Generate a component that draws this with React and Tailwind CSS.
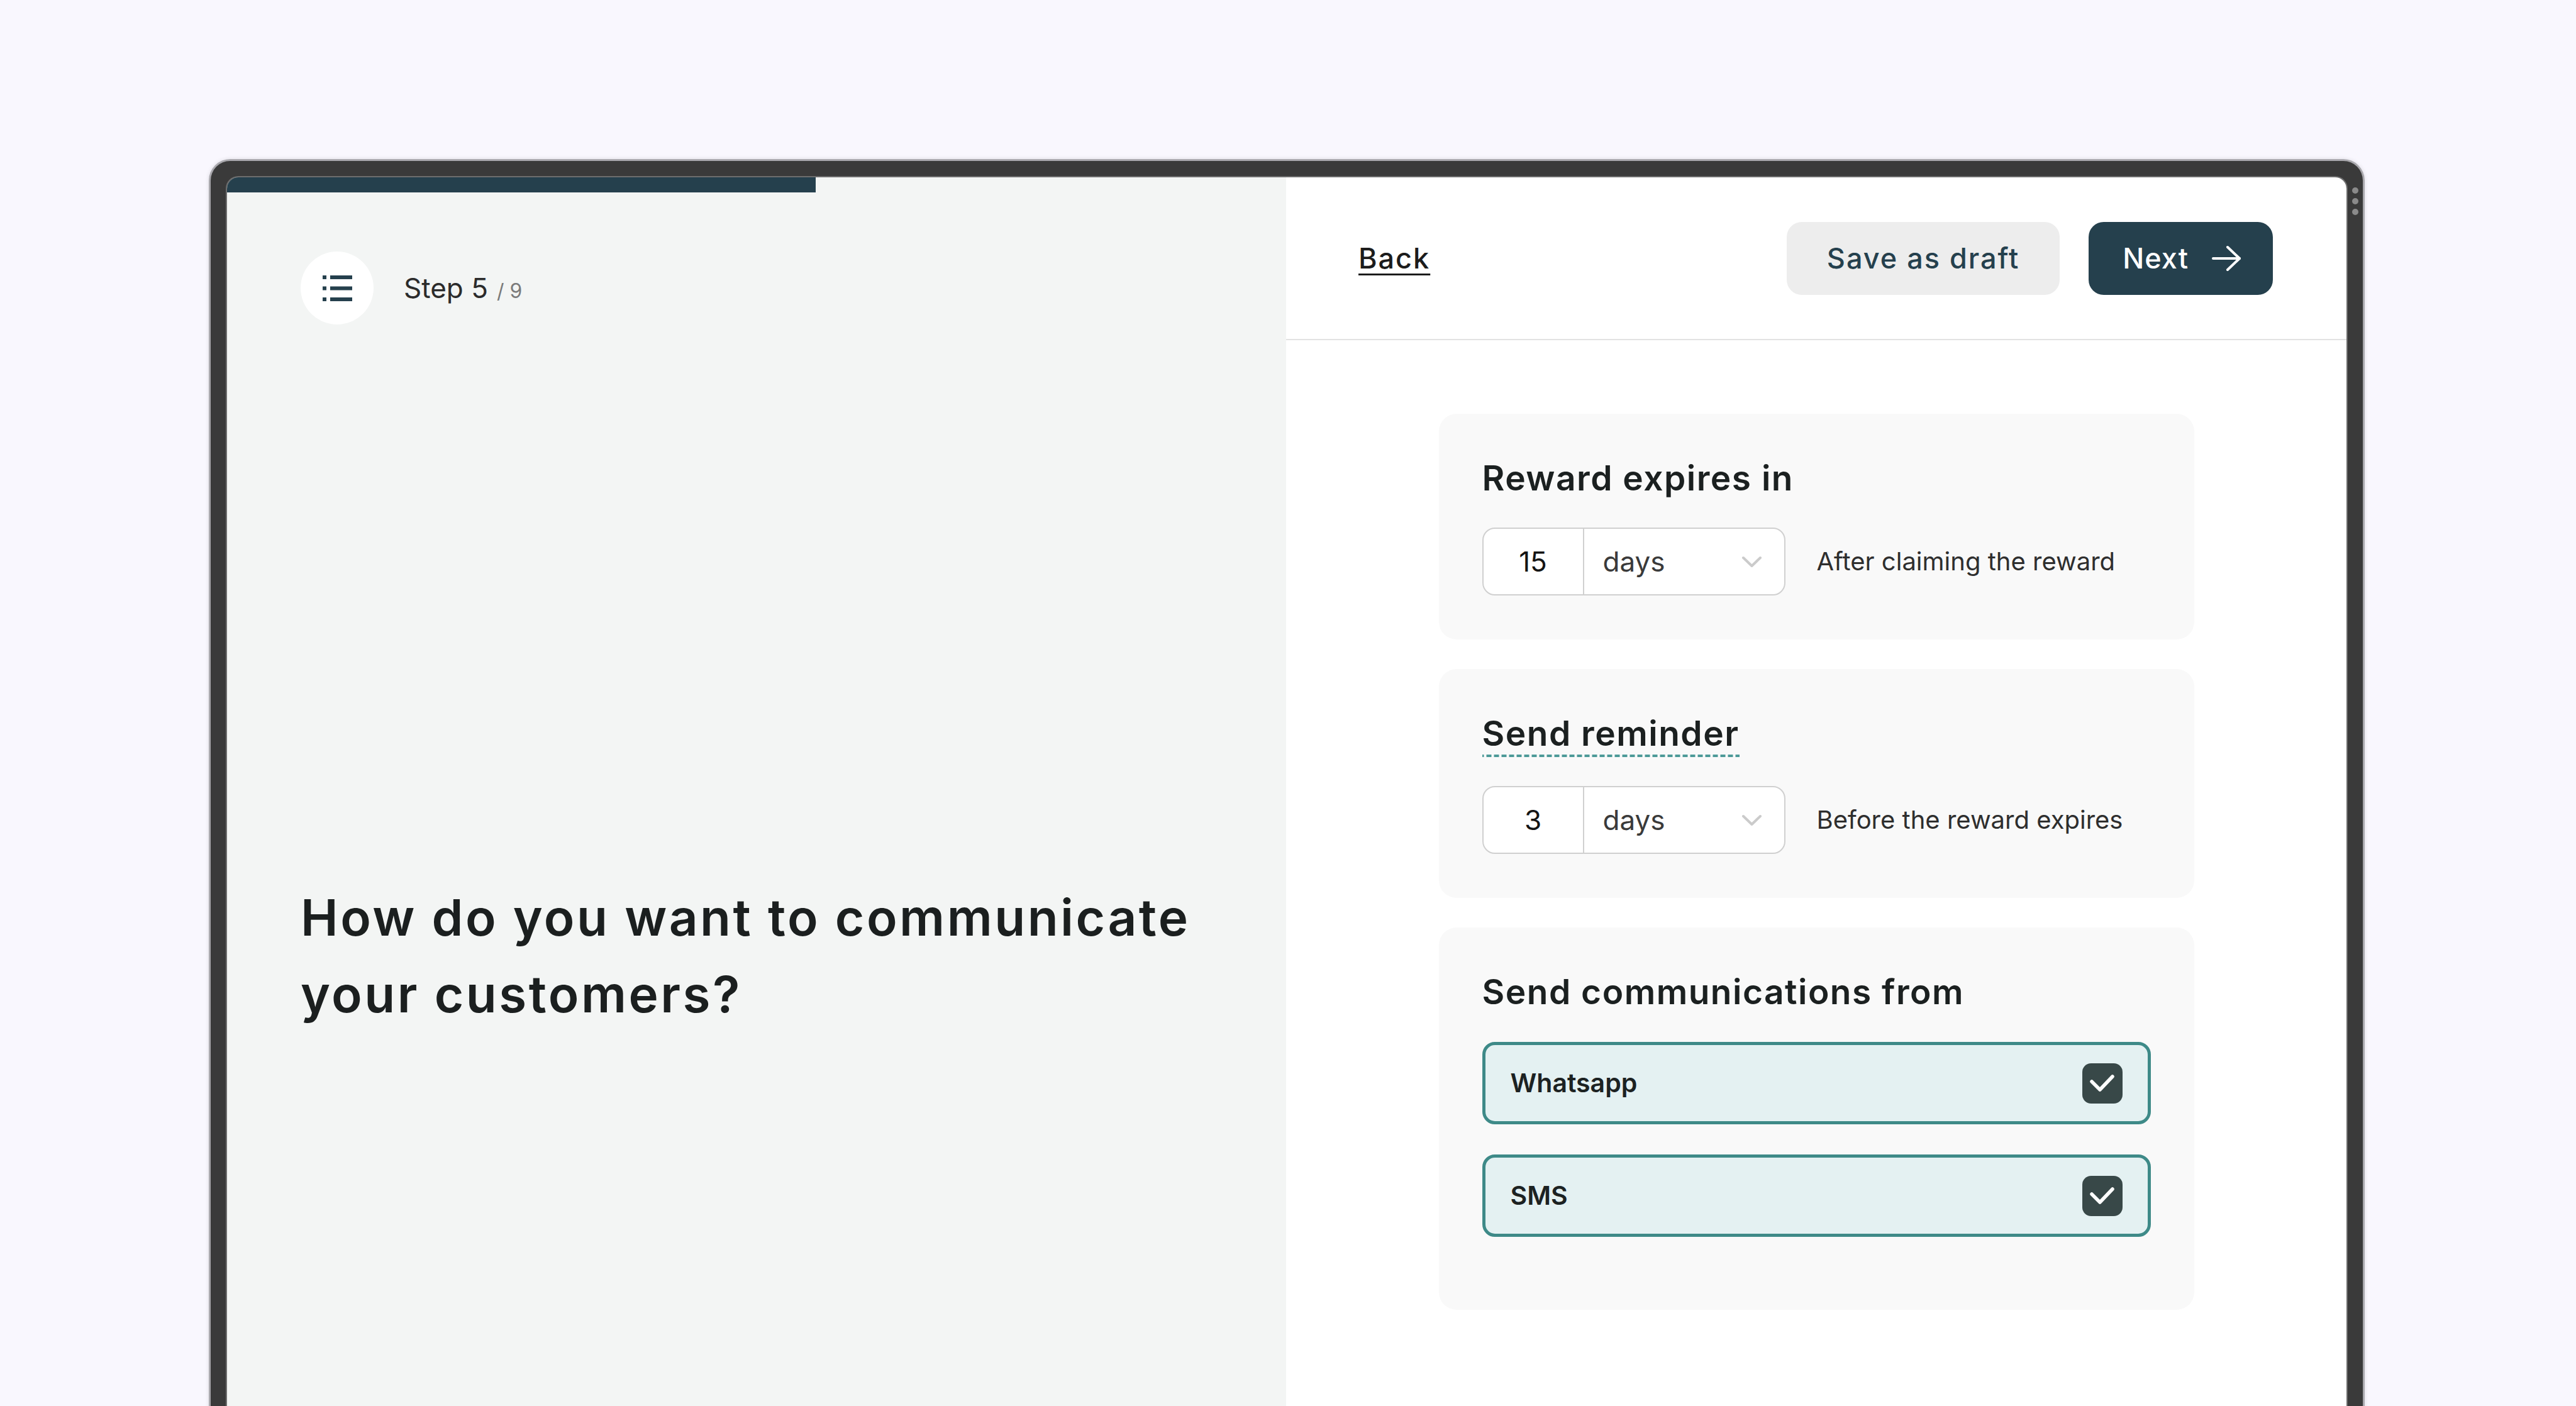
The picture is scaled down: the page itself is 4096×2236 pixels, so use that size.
import React from "react";

function MenuIcon() {
  return (
    <svg width="47" height="41" viewBox="0 0 47 41" fill="#25404d">
      <rect x="0" y="0" width="6" height="6" />
      <rect x="12" y="0" width="35" height="6" />
      <rect x="0" y="17.5" width="6" height="6" />
      <rect x="12" y="17.5" width="35" height="6" />
      <rect x="0" y="35" width="6" height="6" />
      <rect x="12" y="35" width="35" height="6" />
    </svg>
  );
}

function ArrowIcon() {
  return (
    <svg width="48" height="42" viewBox="0 0 48 42" fill="none" stroke="#ffffff" strokeWidth="4" strokeLinecap="round" strokeLinejoin="round">
      <path d="M3 21H45" />
      <path d="M26 3L45 21L26 39" />
    </svg>
  );
}

function Chevron() {
  return (
    <svg width="33" height="19" viewBox="0 0 33 19" fill="none" stroke="#cbcbcb" strokeWidth="4" strokeLinecap="round" strokeLinejoin="round">
      <path d="M3 3L16.5 16L30 3" />
    </svg>
  );
}

function Check() {
  return (
    <svg width="64" height="64" viewBox="0 0 64 64" fill="none" stroke="#ffffff" strokeWidth="5.5" strokeLinecap="round" strokeLinejoin="round">
      <path d="M15 29L28 42L48 21" />
    </svg>
  );
}

function DurationInput({ value, desc }) {
  return (
    <div className="mt-[46px] flex items-center gap-[50px]">
      <div className="flex h-[108px] w-[482px] rounded-[20px] border-2 border-[#d0d0d0] bg-white">
        <div className="flex w-[160px] items-center justify-center border-r-2 border-[#d0d0d0] text-[44px] text-[#141414]">
          {value}
        </div>
        <div className="flex flex-1 items-center justify-between pl-[30px] pr-[35px] text-[44px] text-[#3a3a3a]">
          <span>days</span>
          <Chevron />
        </div>
      </div>
      <div className="text-[40px] text-[#2e2e2e]">{desc}</div>
    </div>
  );
}

function CheckRow({ label }) {
  return (
    <div className="flex h-[131px] items-center justify-between rounded-[20px] border-[5px] border-[#3e8a88] bg-[#e4f1f2] pl-[40px] pr-[40px]">
      <span className="text-[41px] font-semibold text-[#1c2222]">{label}</span>
      <div className="flex h-[64px] w-[64px] items-center justify-center rounded-[14px] bg-[#384848]">
        <Check />
      </div>
    </div>
  );
}

export default function App() {
  return (
    <div
      className="h-[2236px] w-[4096px] overflow-hidden bg-[#f9f7fe] pl-[332px] pt-[253px]"
      style={{ fontFamily: "Inter, 'Noto Sans', sans-serif" }}
    >
      <div className="relative h-[2100px] w-[3428px] rounded-t-[34px] border-[3px] border-b-0 border-[#a9a8ad] bg-[#3a3a3a] px-[24px] pt-[24px] shadow-[0_0_6px_rgba(0,0,0,0.12)]">
        <div className="absolute right-[7px] top-[42px] flex flex-col gap-[7px]">
          <div className="h-[10px] w-[10px] rounded-full bg-[#8a8a8a]" />
          <div className="h-[10px] w-[10px] rounded-full bg-[#8a8a8a]" />
          <div className="h-[10px] w-[10px] rounded-full bg-[#8a8a8a]" />
        </div>
        <div className="flex h-full overflow-hidden rounded-t-[20px] border-2 border-b-0 border-[#6e6e6e]">
          {/* Left panel */}
          <div className="flex w-[1684px] flex-col bg-[#f3f5f4]">
            <div className="h-[24px] w-[936px] bg-[#25404d]" />
            <div className="ml-[117px] mt-[94px] flex items-center gap-[48px]">
              <div className="flex h-[116px] w-[116px] items-center justify-center rounded-full bg-white">
                <MenuIcon />
              </div>
              <div className="flex items-baseline text-[#2b2b2b]">
                <span className="text-[44px]">Step 5</span>
                <span className="ml-[14px] text-[32px] text-[#7a7a7a]">/ 9</span>
              </div>
            </div>
            <h1 className="ml-[117px] mt-[882px] text-[80px] font-semibold leading-[122px] tracking-[3.5px] text-[#1b1f1f]">
              How do you want to communicate
              <br />
              your customers?
            </h1>
          </div>

          {/* Right panel */}
          <div className="flex flex-1 flex-col bg-white">
            <div className="flex h-[259px] items-center justify-between border-b-2 border-[#e2e2e2] pl-[115px] pr-[117px]">
              <span className="text-[45px] font-medium tracking-[2px] text-[#1c1c1c] underline decoration-[3px] underline-offset-[8px]">
                Back
              </span>
              <div className="flex items-center gap-[46px]">
                <button className="flex h-[116px] items-center rounded-[24px] bg-[#ededed] px-[64px] text-[45px] font-medium tracking-[2px] text-[#25404d]">
                  Save as draft
                </button>
                <button className="flex h-[116px] items-center gap-[36px] rounded-[24px] bg-[#25404d] pl-[54px] pr-[50px] text-[45px] font-medium tracking-[1px] text-white">
                  <span>Next</span>
                  <ArrowIcon />
                </button>
              </div>
            </div>

            <div className="flex flex-col items-center gap-[47px] pt-[117px]">
              <div className="w-[1201px] rounded-[28px] bg-[#f9f9f9] px-[69px] pb-[70px] pt-[69px]">
                <div className="text-[55px] font-semibold leading-[66px] tracking-[1.5px] text-[#1b2020]">
                  Reward expires in
                </div>
                <DurationInput value="15" desc="After claiming the reward" />
              </div>

              <div className="w-[1201px] rounded-[28px] bg-[#f9f9f9] px-[69px] pb-[70px] pt-[69px]">
                <div className="w-fit bg-[linear-gradient(to_right,#4d9a98_66%,transparent_66%)] bg-[length:12px_4px] bg-bottom bg-repeat-x pb-[5px] text-[55px] font-semibold leading-[66px] tracking-[1.5px] text-[#1b2020]">
                  Send reminder
                </div>
                <DurationInput value="3" desc="Before the reward expires" />
              </div>

              <div className="w-[1201px] rounded-[28px] bg-[#f9f9f9] px-[69px] pb-[116px] pt-[69px]">
                <div className="text-[55px] font-semibold leading-[66px] tracking-[1.5px] text-[#1b2020]">
                  Send communications from
                </div>
                <div className="mt-[47px] flex flex-col gap-[48px]">
                  <CheckRow label="Whatsapp" />
                  <CheckRow label="SMS" />
                </div>
              </div>
            </div>
          </div>
        </div>
      </div>
    </div>
  );
}
